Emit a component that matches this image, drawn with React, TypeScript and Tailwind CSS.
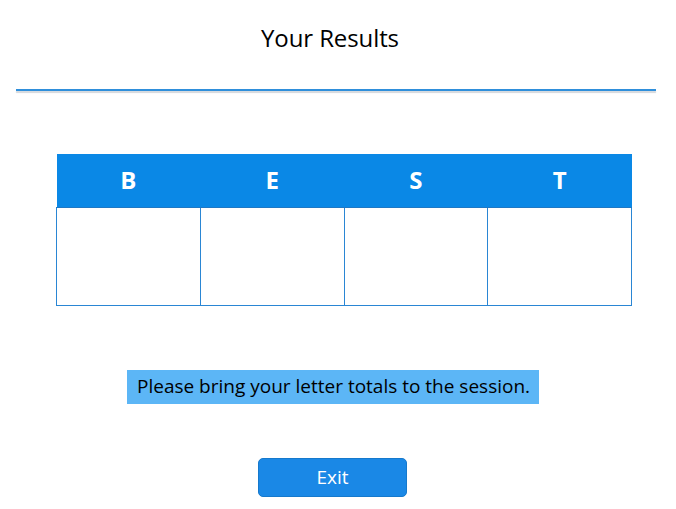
import React from 'react';

const letters = ['B', 'E', 'S', 'T'];

const App: React.FC = () => {
  return (
    <div className="w-[676px] h-[509px] bg-white flex flex-col items-start font-['Open_Sans',sans-serif] text-black">
      <h1 className="mt-[22px] w-[660px] text-center text-[24px] leading-[32px] font-normal tracking-[-0.1px]">Your Results</h1>

      <div className="mt-[35px] ml-[16px] w-[640px] h-[2px] bg-[#2f8fdb] shadow-[0_2px_1px_#d4d8dc]" />

      <table className="mt-[63px] ml-[56px] w-[576px] border-collapse table-fixed">
        <thead>
          <tr className="bg-[#0a88e6] h-[53px]">
            {letters.map((l) => (
              <th key={l} className="text-white text-[24px] font-bold border-b border-[#1f78c4]">
                {l}
              </th>
            ))}
          </tr>
        </thead>
        <tbody>
          <tr className="h-[98px]">
            {letters.map((l) => (
              <td key={l} className="border border-[#2a86d4]" />
            ))}
          </tr>
        </tbody>
      </table>

      <div className="mt-[64px] ml-[127px] w-[412px] h-[34px] bg-[#5cb6f6] flex items-center px-[10px]">
        <p className="text-[19px] leading-none whitespace-nowrap">Please bring your letter totals to the session.</p>
      </div>

      <button className="mt-[54px] ml-[258px] w-[149px] h-[39px] rounded-[5px] bg-[#1a88e6] text-white text-[19px] border border-[#1679cc]">
        Exit
      </button>
    </div>
  );
};

export default App;
